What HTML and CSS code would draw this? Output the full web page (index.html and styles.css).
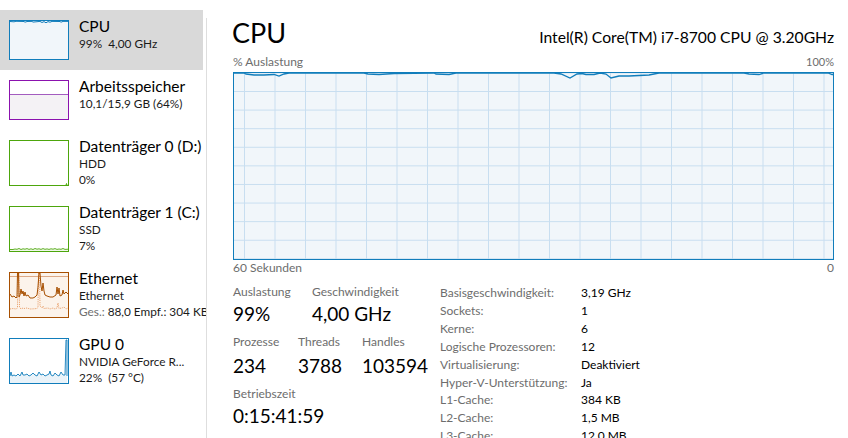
FILE: index.html
```html
<!DOCTYPE html>
<html lang="de">
<head>
<meta charset="utf-8">
<title>Task-Manager – CPU</title>
<link rel="stylesheet" href="styles.css">
</head>
<body>
<div class="app">
  <aside class="sidebar">
    <div class="item selected">
      <div class="thumb cpu">
        <svg viewBox="0 0 58 38" preserveAspectRatio="none"><polyline fill="none" stroke="#117dbb" stroke-width="1" points="0,0.5 4,0.8 6,0.3 14,0.5 15,1.2 17,0.5 22,0.4 23,1.1 30,0.4 32,1.5 34,0.6 36,1.8 38,0.6 40,1.2 42,0.4 50,0.5 51,1.2 53,0.4 58,0.4"/></svg>
      </div>
      <div class="txt"><div class="t">CPU</div><div class="s">99%&nbsp; 4,00 GHz</div></div>
    </div>
    <div class="item">
      <div class="thumb mem"><div class="memfill"></div></div>
      <div class="txt"><div class="t">Arbeitsspeicher</div><div class="s">10,1/15,9 GB (64%)</div></div>
    </div>
    <div class="item tall">
      <div class="thumb disk">
        <svg viewBox="0 0 58 44" preserveAspectRatio="none"><polyline fill="none" stroke="#4da60c" stroke-width="1" points="56,44 56.5,42.5 57,44"/></svg>
      </div>
      <div class="txt"><div class="t">Datenträger 0 (D:)</div><div class="s">HDD</div><div class="s">0%</div></div>
    </div>
    <div class="item tall">
      <div class="thumb disk">
        <svg viewBox="0 0 58 44" preserveAspectRatio="none"><polygon fill="#f0f8ea" points="0,44 0,42.5 3,42.5 5,42 7,42.3 9,41.5 11,42.5 13,41.8 15,42.2 17,41.6 19,42.4 21,41.8 23,42.5 25,41.5 27,42.2 29,41.8 31,42.4 33,41.6 35,42.3 37,41.9 39,42.4 41,41.8 43,42.2 45,41.6 47,42.4 49,42 51,42.3 53,41.5 55,42.4 58,42.2 58,44"/><polyline fill="none" stroke="#4da60c" stroke-width="0.9" points="0,42.5 3,42.5 5,42 7,42.3 9,41.5 11,42.5 13,41.8 15,42.2 17,41.6 19,42.4 21,41.8 23,42.5 25,41.5 27,42.2 29,41.8 31,42.4 33,41.6 35,42.3 37,41.9 39,42.4 41,41.8 43,42.2 45,41.6 47,42.4 49,42 51,42.3 53,41.5 55,42.4 58,42.2"/></svg>
      </div>
      <div class="txt"><div class="t">Datenträger 1 (C:)</div><div class="s">SSD</div><div class="s">7%</div></div>
    </div>
    <div class="item tall">
      <div class="thumb eth">
        <svg viewBox="0 0 58 44" preserveAspectRatio="none">
          <line x1="0" y1="3.5" x2="58" y2="3.5" stroke="#dca987" stroke-width="1"/>
          <polyline fill="none" stroke="#e79a62" stroke-width="0.9" stroke-dasharray="1.2 1" points="0,36 3,35.5 6,36 7.5,35 8,0 9,0 9.5,34 11,36 13,35 14,35.5 17,35 20,36 24,35.8 27,35.5 28,34 28.5,0 29.5,0 30,33 32,35 33,33 34,35.5 38,35 40,36 43,35 45,36 47,35 48,30 49,35.5 52,35 54,34 56,36 58,35"/>
          <polyline fill="none" stroke="#a74f01" stroke-width="1" points="0,21 2,24 4,23 6,25 7,24 7.5,0 8.5,0 9,24 10,22 11,16 12,21 13,18 14,23 15,19 16,23 18,22 20,25 23,25 25,24 27,22 28,14 29,0 30,0 31,13 32,18 33,10 34,18 35,22 37,23 40,24 43,24 46,22 47,14 48,21 49,15 50,23 52,22 53,17 54,21 56,19 58,21"/>
        </svg>
      </div>
      <div class="txt"><div class="t">Ethernet</div><div class="s">Ethernet</div><div class="s"><span class="g">Ges.:</span> 88,0 Empf.: 304 KB</div></div>
    </div>
    <div class="item tall">
      <div class="thumb gpu">
        <svg viewBox="0 0 58 44" preserveAspectRatio="none">
          <polygon fill="#eaf3f9" points="0,44 0,37 1,33 2,37 4,36 6,37 8,35 10,37 12,33 13,36 15,36 17,35 19,37 21,36 23,34 25,36 27,37 29,33 31,36 33,35 35,37 37,36 39,35 40,32 41,36 43,37 45,34 47,36 49,37 51,33 53,36 55,36 56,1 57,1 57,44"/>
          <polyline fill="none" stroke="#117dbb" stroke-width="0.9" points="0,37 1,33 2,37 4,36 6,37 8,35 10,37 12,33 13,36 15,36 17,35 19,37 21,36 23,34 25,36 27,37 29,33 31,36 33,35 35,37 37,36 39,35 40,32 41,36 43,37 45,34 47,36 49,37 51,33 53,36 55,36 56,1 57,1 57,37"/>
        </svg>
      </div>
      <div class="txt"><div class="t">GPU 0</div><div class="s">NVIDIA GeForce R...</div><div class="s">22%&nbsp; (57 °C)</div></div>
    </div>
  </aside>
  <div class="divider"></div>
  <main class="main">
    <div class="head">
      <h1>CPU</h1>
      <div class="model">Intel(R) Core(TM) i7-8700 CPU @ 3.20GHz</div>
    </div>
    <div class="axis top"><span>% Auslastung</span><span class="small">100%</span></div>
    <div class="graph">
      <svg class="line" viewBox="0 0 599 186" preserveAspectRatio="none"><polyline fill="none" stroke="#117dbb" stroke-width="1.3" points="0,0 10,0 12,1 20,2 30,2 40,1.5 45,3 50,1 55,0 130,0 134,1 145,1.5 160,0.5 200,0 202,1 215,1.5 222,0 320,0 327,1 336,5 343,1 348,0.5 352,1.5 360,1.5 366,0 372,1 377,5 385,3 395,3 405,2.5 415,2 420,1 425,0 510,0 515,1 525,1.5 530,0 594,0 598,1.5 599,1.5"/></svg>
    </div>
    <div class="axis"><span>60 Sekunden</span><span>0</span></div>
    <div class="stats">
      <div class="left">
        <div class="row r1">
          <div class="stat w79"><div class="lbl">Auslastung</div><div class="val">99%</div></div>
          <div class="stat"><div class="lbl">Geschwindigkeit</div><div class="val">4,00 GHz</div></div>
        </div>
        <div class="row r2">
          <div class="stat w65"><div class="lbl">Prozesse</div><div class="val">234</div></div>
          <div class="stat w64"><div class="lbl">Threads</div><div class="val">3788</div></div>
          <div class="stat"><div class="lbl">Handles</div><div class="val">103594</div></div>
        </div>
        <div class="row r3">
          <div class="stat"><div class="lbl">Betriebszeit</div><div class="val">0:15:41:59</div></div>
        </div>
      </div>
      <div class="info">
        <span class="k">Basisgeschwindigkeit:</span><span>3,19 GHz</span>
        <span class="k">Sockets:</span><span>1</span>
        <span class="k">Kerne:</span><span>6</span>
        <span class="k">Logische Prozessoren:</span><span>12</span>
        <span class="k">Virtualisierung:</span><span>Deaktiviert</span>
        <span class="k">Hyper-V-Unterstützung:</span><span>Ja</span>
        <span class="k">L1-Cache:</span><span>384 KB</span>
        <span class="k">L2-Cache:</span><span>1,5 MB</span>
        <span class="k">L3-Cache:</span><span>12,0 MB</span>
      </div>
    </div>
  </main>
</div>
</body>
</html>
```
FILE: styles.css
```css
html, body {
  margin: 0;
  padding: 0;
  background: #fff;
}
body {
  font-family: Lato, "Noto Sans", sans-serif;
  color: #000;
  width: 848px;
  height: 438px;
  overflow: hidden;
}
.app {
  display: flex;
  height: 438px;
}
.sidebar {
  width: 206px;
  flex: none;
  overflow: hidden;
  padding-top: 10px;
  box-sizing: border-box;
  white-space: nowrap;
}
.item {
  width: 203px;
  height: 60px;
  display: flex;
  box-sizing: border-box;
}
.item.tall {
  height: 66px;
}
.item.selected {
  background: #d9d9d9;
}
.thumb {
  width: 60px;
  flex: none;
  margin: 10px 10px 10px 9px;
  box-sizing: border-box;
  border: 1px solid #117dbb;
  background: #fff;
  position: relative;
  overflow: hidden;
}
.thumb svg {
  display: block;
  width: 100%;
  height: 100%;
}
.thumb.cpu {
  background: #f1f6fa;
}
.thumb.mem {
  border-color: #8b12ae;
  display: flex;
  flex-direction: column;
  justify-content: flex-end;
}
.memfill {
  height: 24px;
  border-top: 1px solid #a35cbf;
  background: #f4f2f5;
}
.thumb.disk {
  border-color: #4da60c;
}
.thumb.eth {
  border-color: #a74f01;
  background: #fcf3eb;
}
.thumb.gpu {
  border-color: #117dbb;
}
.txt {
  padding-top: 6px;
}
.txt .t {
  font-size: 15.5px;
  line-height: 20px;
}
.txt .s {
  font-size: 11.8px;
  line-height: 16px;
  color: #1a1a1a;
}
.txt .g {
  color: #6d6d6d;
}
.divider {
  width: 1px;
  flex: none;
  margin-top: 18px;
  background: #dedede;
}
.main {
  flex: 1;
  min-width: 0;
  padding: 16px 14px 0 25px;
  overflow: hidden;
}
.head {
  display: flex;
  justify-content: space-between;
  align-items: baseline;
  height: 34px;
}
.head h1 {
  margin: 0;
  font-size: 27px;
  line-height: 34px;
  font-weight: 400;
}
.model {
  font-size: 15.7px;
  line-height: 20px;
}
.axis {
  display: flex;
  justify-content: space-between;
  font-size: 12px;
  line-height: 16px;
  color: #6d6d6d;
  padding-left: 1px;
}
.axis.top {
  margin-top: 4px;
}
.axis .small {
  font-size: 11px;
}
.graph {
  margin-top: 2px;
  margin-left: 1px;
  height: 188px;
  box-sizing: border-box;
  border: 1px solid #117dbb;
  position: relative;
  background-color: #f1f6fa;
  background-image:
    linear-gradient(to right, #c8def0 1px, transparent 1px),
    linear-gradient(to bottom, #c8def0 1px, transparent 1px);
  background-size: 30.5px 18.6px;
  background-position: 10px 18px;
}
.graph .line {
  position: absolute;
  left: 0;
  top: 0;
  width: 100%;
  height: 100%;
  overflow: visible;
}
.stats {
  display: flex;
  margin-top: 8px;
  padding-left: 1px;
}
.left {
  width: 207px;
  flex: none;
}
.row {
  display: flex;
}
.r2 {
  margin-top: 6px;
}
.r3 {
  margin-top: 4px;
}
.w79 { width: 79px; }
.w65 { width: 65px; }
.w64 { width: 64px; }
.stat .lbl {
  font-size: 12px;
  line-height: 16px;
  color: #6d6d6d;
}
.stat .val {
  font-size: 19px;
  line-height: 28px;
}
.r2 .val {
  line-height: 32px;
}
.info {
  display: grid;
  grid-template-columns: 141px auto;
  font-size: 12px;
  line-height: 17.9px;
  margin-top: 0;
  align-content: start;
}
.info .k {
  color: #6d6d6d;
}
```
